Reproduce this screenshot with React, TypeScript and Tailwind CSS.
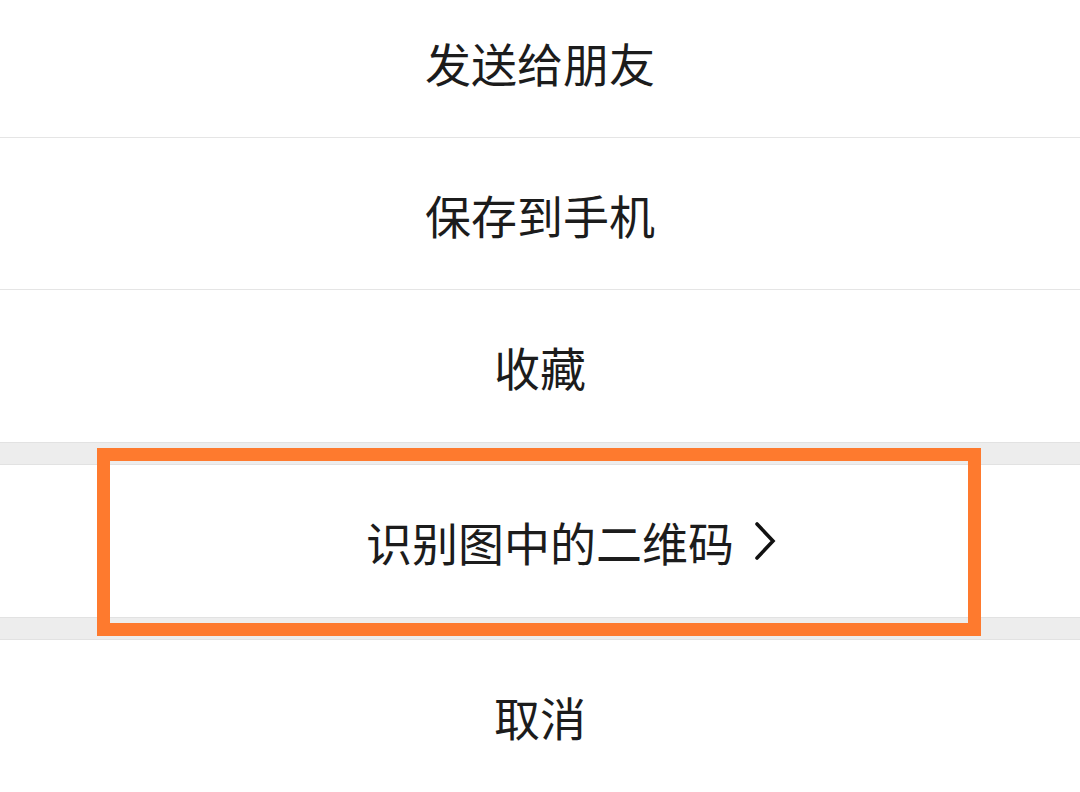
import React from "react";

const font = { fontFamily: '"Noto Sans CJK SC", "Noto Sans", sans-serif' };

function Row({ children }: { children: React.ReactNode }) {
  return (
    <div className="h-[152px] flex items-center justify-center bg-white border-b border-[#e5e5e5]">
      {children}
    </div>
  );
}

export default function App() {
  return (
    <div className="relative w-[1080px] h-[792px] overflow-hidden bg-white text-[#1c1c1c] font-normal" style={font}>
      <div className="flex flex-col -mt-[14px]">
        <Row>
          <span className="text-[46px] leading-none">发送给朋友</span>
        </Row>
        <Row>
          <span className="text-[46px] leading-none">保存到手机</span>
        </Row>
        <div className="h-[152px] flex items-center justify-center bg-white">
          <span className="text-[46px] leading-none">收藏</span>
        </div>
        <div className="h-[23px] bg-[#ededed] border-y border-[#e2e2e2]" />
        <div className="h-[152px] flex items-center justify-center bg-white">
          <div className="flex items-center pl-[62px]">
            <span className="text-[46px] leading-none">识别图中的二维码</span>
            <svg width="22" height="40" viewBox="0 0 22 40" className="ml-[20px]">
              <polyline points="3,3 19,20 3,37" fill="none" stroke="#111" strokeWidth="3.6" strokeLinecap="round" strokeLinejoin="miter" />
            </svg>
          </div>
        </div>
        <div className="h-[23px] bg-[#ededed] border-y border-[#e2e2e2]" />
        <div className="h-[152px] flex items-center justify-center bg-white">
          <span className="text-[46px] leading-none">取消</span>
        </div>
      </div>
      <div className="absolute left-[97px] top-[448px] w-[884px] h-[188px] border-[13px] border-[#fe7a2e]" />
    </div>
  );
}
